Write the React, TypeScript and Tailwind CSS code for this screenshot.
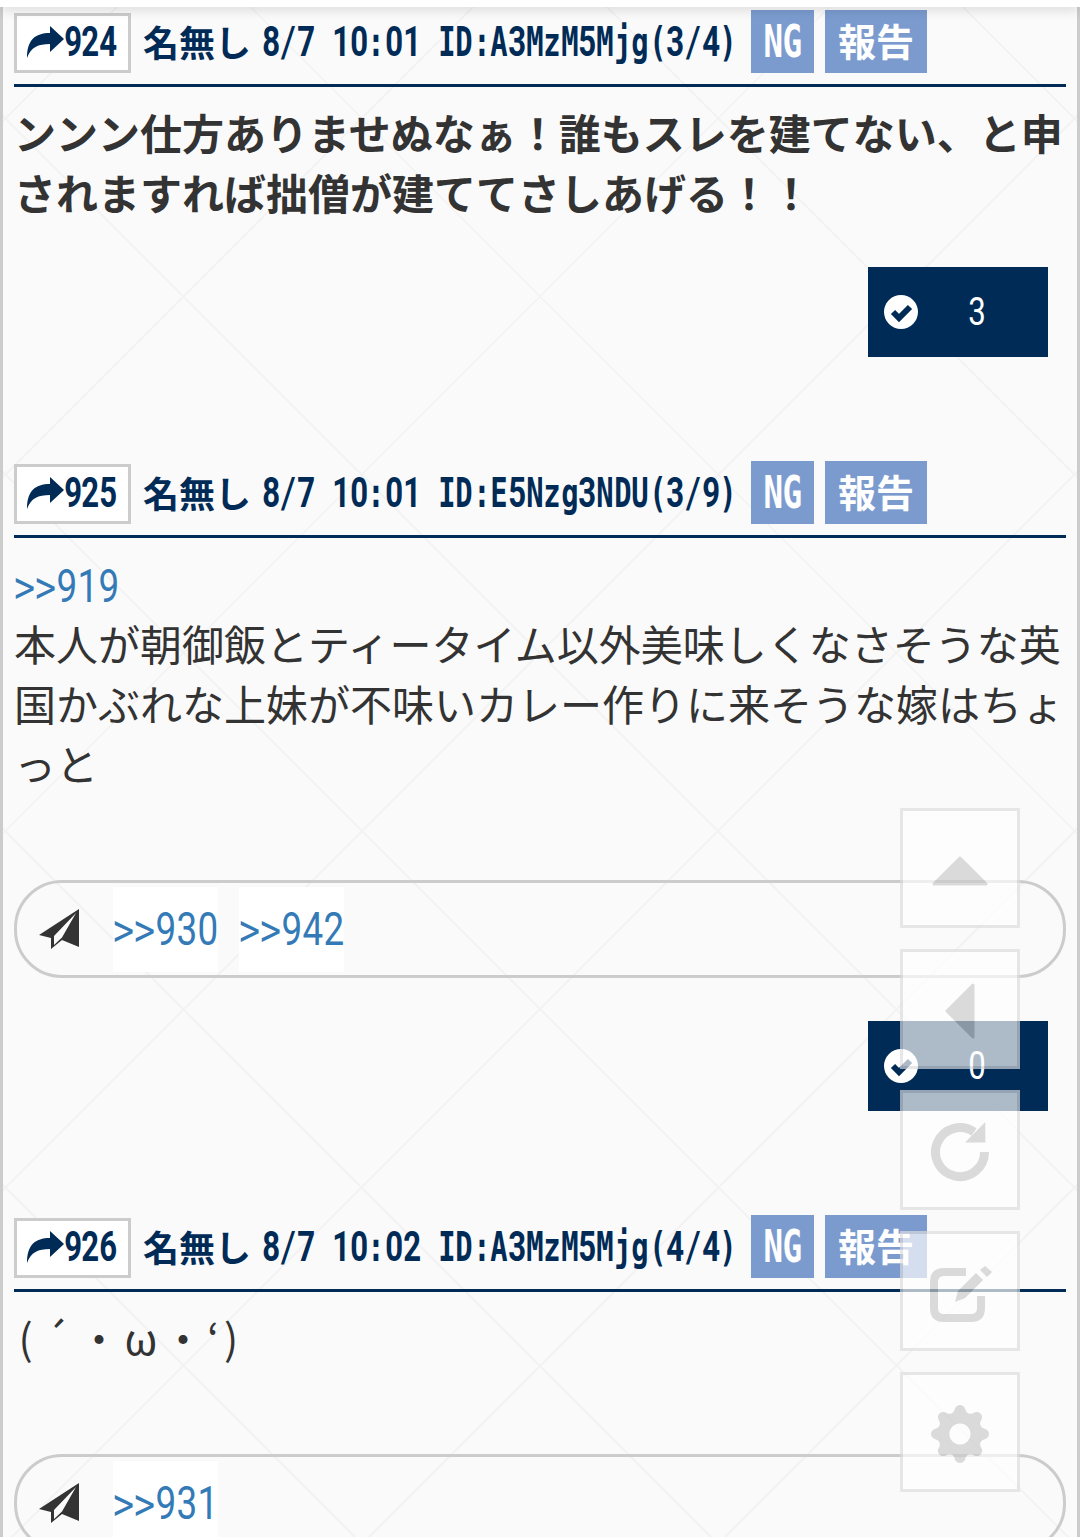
import React from "react";
import { BsGearFill } from "react-icons/bs";

const cjk = "font-['Noto_Sans_CJK_JP','Noto_Sans_CJK_SC',sans-serif]";

const variants = {
    head: {
        cell: "w-[17.6px] text-[#002b57]",
        digit: "font-['Roboto',sans-serif] font-bold text-[42px] scale-x-[.74]",
        other: "font-['DejaVu_Sans_Mono',monospace] font-bold text-[40px] scale-x-[.72]",
    },
    ng: {
        cell: "w-[19.5px] text-white",
        digit: "font-['Roboto',sans-serif] font-bold text-[46px] scale-x-[.74]",
        other: "font-['DejaVu_Sans_Mono',monospace] font-bold text-[44px] scale-x-[.74]",
    },
    link: {
        cell: "w-[21px] text-[#337ab7]",
        digit: "font-['Roboto',sans-serif] font-normal text-[46px] scale-x-[.8]",
        other: "font-['DejaVu_Sans_Mono',monospace] font-normal text-[42px] scale-x-[.82]",
    },
    vote: {
        cell: "w-[17.6px] text-white",
        digit: "font-['Roboto',sans-serif] font-normal text-[39px] scale-x-[.8]",
        other: "font-['DejaVu_Sans_Mono',monospace] font-normal text-[38px] scale-x-[.8]",
    },
};

// half width latin text, every character sits in a cell of its own like the phone font
function Half({ text, variant }: { text: string; variant: keyof typeof variants }) {
    const v = variants[variant];
    return (
        <span className="inline-flex items-baseline leading-none">
            {text.split("").map((c, i) => (
                <span key={i} className={`inline-flex justify-center whitespace-pre ${v.cell}`}>
                    <span className={`inline-block shrink-0 leading-none ${/[0-9]/.test(c) ? v.digit : v.other}`}>
                        {c === " " ? "\u00a0" : c}
                    </span>
                </span>
            ))}
        </span>
    );
}

function ShareIcon() {
    return (
        <svg viewBox="0 0 37 32" className="w-[37px] h-[32px] shrink-0 text-[#002b57]">
            <path fill="currentColor" d="M37 13 L23 0 L23 7 C8 7 0 14 0 32 C4 21 11 18 23 18 L23 26 Z" />
        </svg>
    );
}

function CheckIcon() {
    return (
        <svg viewBox="0 0 34 34" className="w-[34px] h-[34px] shrink-0">
            <circle cx="17" cy="17" r="17" fill="#fff" />
            <path d="M9 17 L15 23 L26 12" fill="none" stroke="#002b57" strokeWidth="6" />
        </svg>
    );
}

function PlaneIcon() {
    return (
        <svg viewBox="0 0 42 42" className="w-[42px] h-[42px] shrink-0 text-[#333]">
            <path
                fill="currentColor"
                fillRule="evenodd"
                d="M1 27 L41 1 L41 39 L24 32 L13 41 L13 30 Z M38 5 L16 28 L16 37 L24 29.5 Z"
            />
        </svg>
    );
}

function PostHeader({ no, date, id, count }: { no: string; date: string; id: string; count: string }) {
    return (
        <div className="flex items-stretch h-[60px]">
            <div className="flex items-center w-[117px] h-[60px] pl-[10px] pb-[2px] border-[3px] border-[#ccc] bg-white">
                <ShareIcon />
                <Half text={no} variant="head" />
            </div>
            <div className={`flex items-center ml-[12px] w-[608px] pb-[2px] ${cjk}`}>
                <span className="pb-[3px] text-[36px] font-bold text-[#002b57] leading-none">名無し</span>
                <span className="ml-[11px]">
                    <Half text={`${date} ID:${id}${count}`} variant="head" />
                </span>
            </div>
            <div className="flex gap-[11px] -mt-[3px] h-[63px]">
                <div className="flex items-center justify-center w-[63px] bg-[#7b9bcf]">
                    <Half text="NG" variant="ng" />
                </div>
                <div className={`flex items-center justify-center w-[102px] pb-[4px] bg-[#7b9bcf] text-white font-bold text-[38px] leading-none ${cjk}`}>
                    報告
                </div>
            </div>
        </div>
    );
}

function VoteButton({ n, afterPill }: { n: string; afterPill: boolean }) {
    return (
        <div className={`flex justify-end pr-[18px] ${afterPill ? "mt-[43px]" : "mt-[42px]"}`}>
            <div className="flex items-center w-[180px] h-[90px] pl-[16px] bg-[#002b57]">
                <CheckIcon />
                <span className="ml-[50px]">
                    <Half text={n} variant="vote" />
                </span>
            </div>
        </div>
    );
}

function ReplyPill({ links }: { links: string[] }) {
    return (
        <div className="flex items-center h-[98px] mt-[84px] pl-[21px] border-[3px] border-[#ccc] rounded-[48px]">
            <PlaneIcon />
            <div className="flex gap-[21px] ml-[33px]">
                {links.map((l) => (
                    <div key={l} className="flex items-center h-[85px] bg-white">
                        <Half text={l} variant="link" />
                    </div>
                ))}
            </div>
        </div>
    );
}

function Post({ header, children, pill, vote }: {
    header: { no: string; date: string; id: string; count: string };
    children: React.ReactNode;
    pill?: string[];
    vote?: string;
}) {
    return (
        <section className="mb-[107px]">
            <PostHeader {...header} />
            <div className="h-[3px] mt-[11px] bg-[#002b57]" />
            <div className={`mt-[15px] pb-[3px] text-[42px] leading-[60px] text-[#333] ${cjk}`}>{children}</div>
            {pill && <ReplyPill links={pill} />}
            {vote && <VoteButton n={vote} afterPill={!!pill} />}
        </section>
    );
}

function FloatButton({ children }: { children: React.ReactNode }) {
    return (
        <div className="flex items-center justify-center w-[120px] h-[120px] bg-white border-[3px] border-[#ddd] text-[#ccc]">
            {children}
        </div>
    );
}

export default function App() {
    return (
        <div className="relative h-[1537px] overflow-hidden bg-[#fafafa] bg-[repeating-linear-gradient(45deg,transparent_0,transparent_250px,#f3f3f3_250px,#f3f3f3_252px),repeating-linear-gradient(-45deg,transparent_0,transparent_250px,#f3f3f3_250px,#f3f3f3_252px)]">
            <div className="absolute inset-x-0 top-0 z-10 h-[7px] bg-white shadow-[0_2px_12px_rgba(0,0,0,0.18)]" />
            <div className="h-[1537px] pt-[13px] px-[11px] border-x-[3px] border-[#ccc]">
                <Post
                    header={{ no: "924", date: "8/7 10:01", id: "A3MzM5Mjg", count: "(3/4)" }}
                    vote="3"
                >
                    <p className="font-bold">ンンン仕方ありませぬなぁ！誰もスレを建てない、と申されますれば拙僧が建ててさしあげる！！</p>
                </Post>
                <Post
                    header={{ no: "925", date: "8/7 10:01", id: "E5Nzg3NDU", count: "(3/9)" }}
                    pill={[">>930", ">>942"]}
                    vote="0"
                >
                    <p className="h-[60px] pt-[1px]">
                        <Half text=">>919" variant="link" />
                    </p>
                    <p>本人が朝御飯とティータイム以外美味しくなさそうな英国かぶれな上妹が不味いカレー作りに来そうな嫁はちょっと</p>
                </Post>
                <Post
                    header={{ no: "926", date: "8/7 10:02", id: "A3MzM5Mjg", count: "(4/4)" }}
                    pill={[">>931"]}
                >
                    <p className="pl-[1px]">
                        <span className="inline-block w-[21px] text-center">(</span>
                        <span className="inline-block w-[42px] text-center">´</span>
                        ・<span className="inline-block w-[42px] text-center">ω</span>・
                        <span className="inline-block w-[18px] text-center">‘</span>
                        <span className="inline-block w-[18px] text-center">)</span>
                    </p>
                </Post>
            </div>

            {/* floating tool buttons sit over the thread */}
            <div className="absolute right-[60px] top-[808px] flex flex-col gap-[21px] opacity-[.68]">
                <FloatButton>
                    <svg viewBox="0 0 56 30" className="w-[56px] h-[30px] mt-[6px]">
                        <path d="M28 2 L54 28 L2 28 Z" fill="currentColor" stroke="currentColor" strokeWidth="3" strokeLinejoin="round" />
                    </svg>
                </FloatButton>
                <FloatButton>
                    <svg viewBox="0 0 30 56" className="w-[30px] h-[56px] -ml-[1px] mt-[4px]">
                        <path d="M2 28 L28 2 L28 54 Z" fill="currentColor" stroke="currentColor" strokeWidth="3" strokeLinejoin="round" />
                    </svg>
                </FloatButton>
                <FloatButton>
                    <svg viewBox="0 0 58 60" className="w-[58px] h-[60px] mt-[4px]">
                        <path d="M53.5 30 A24.5 24.5 0 1 1 43 10" fill="none" stroke="currentColor" strokeWidth="9" />
                        <path d="M54.3 0 L54.3 20.6 L34 20.6 Z" fill="currentColor" />
                    </svg>
                </FloatButton>
                <FloatButton>
                    <svg viewBox="0 0 62 56" className="w-[62px] h-[56px] mt-[6px] ml-[2px]">
                        <path d="M36 6 H14 Q4 6 4 16 V42 Q4 52 14 52 H41 Q51 52 51 42 V30" fill="none" stroke="currentColor" strokeWidth="8" />
                        <path d="M25 36 L28 25 L46 7 L53 14 L35 32 Z" fill="currentColor" />
                        <path d="M50 4 L55 0 L62 6 L57 11 Z" fill="currentColor" />
                    </svg>
                </FloatButton>
                <FloatButton>
                    <BsGearFill className="w-[58px] h-[58px] mt-[4px]" />
                </FloatButton>
            </div>
        </div>
    );
}
